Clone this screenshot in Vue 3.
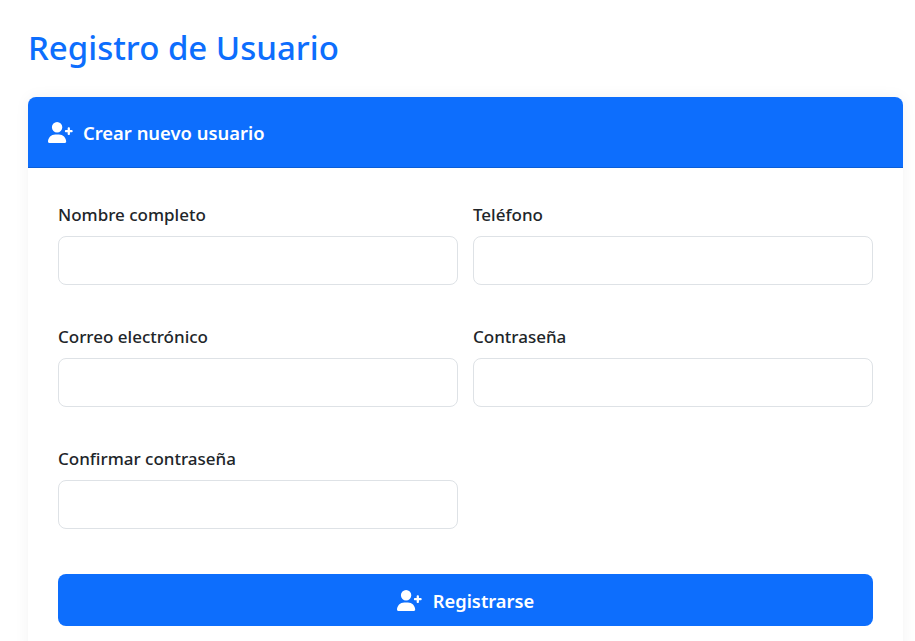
<script setup>
const fields = [
  { id: 'nombre', label: 'Nombre completo', type: 'text' },
  { id: 'telefono', label: 'Teléfono', type: 'tel' },
  { id: 'correo', label: 'Correo electrónico', type: 'email' },
  { id: 'password', label: 'Contraseña', type: 'password' },
  { id: 'confirmar', label: 'Confirmar contraseña', type: 'password' }
]
const userPlus = 'M224 256A128 128 0 1 0 224 0a128 128 0 1 0 0 256zm-45.7 48C79.8 304 0 383.8 0 482.3C0 498.7 13.3 512 29.7 512H418.3c16.4 0 29.7-13.3 29.7-29.7C448 383.8 368.2 304 269.7 304H178.3zM484 292V252H444c-15.5 0-28-12.5-28-28s12.5-28 28-28h40V156c0-15.5 12.5-28 28-28s28 12.5 28 28v40h40c15.5 0 28 12.5 28 28s-12.5 28-28 28H540v40c0 15.5-12.5 28-28 28s-28-12.5-28-28z'
</script>

<template>
  <div class="page">
    <h1 class="title">Registro de Usuario</h1>
    <div class="card">
      <div class="card-header">
        <svg class="icon" viewBox="0 0 640 512"><path :d="userPlus" /></svg>
        <span>Crear nuevo usuario</span>
      </div>
      <form class="card-body" @submit.prevent>
        <div class="form-grid">
          <div v-for="f in fields" :key="f.id" class="field">
            <label :for="f.id">{{ f.label }}</label>
            <input :id="f.id" :type="f.type" />
          </div>
        </div>
        <button class="submit" type="submit">
          <svg class="icon" viewBox="0 0 640 512"><path :d="userPlus" /></svg>
          <span>Registrarse</span>
        </button>
      </form>
    </div>
  </div>
</template>

<style>
html, body {
  margin: 0;
  overflow: hidden;
  background: #fff;
}
</style>

<style scoped>
.page {
  height: 641px;
  box-sizing: border-box;
  padding: 23px 12px 0 28px;
  overflow: hidden;
  font-family: "Noto Sans", "Open Sans", sans-serif;
  color: #212529;
}

.title {
  margin: 0 0 25px;
  height: 49px;
  line-height: 49px;
  font-size: 33px;
  font-weight: 500;
  color: #0d6efd;
}

.card {
  border-radius: 8px 8px 0 0;
  background: #fff;
  box-shadow: 0 0 15px rgba(0, 0, 0, 0.05);
}

.card-header {
  display: flex;
  align-items: center;
  gap: 9px;
  height: 70px;
  padding: 0 20px;
  border-bottom: 1px solid #0b5ed7;
  border-radius: 8px 8px 0 0;
  background: #0d6efd;
  color: #fff;
  font-size: 18.4px;
  font-weight: 600;
}

.icon {
  width: 26px;
  height: 21px;
  fill: #fff;
}

.card-body {
  padding: 35px 30px 30px;
}

.form-grid {
  display: grid;
  grid-template-columns: 400px 400px;
  column-gap: 15px;
  row-gap: 40px;
}

.field {
  display: flex;
  flex-direction: column;
}

label {
  height: 24px;
  line-height: 24px;
  margin-bottom: 9px;
  font-size: 17px;
  font-weight: 500;
}

input {
  height: 49px;
  box-sizing: border-box;
  border: 1px solid #dee2e6;
  border-radius: 8px;
  background: #fff;
}

.submit {
  display: flex;
  align-items: center;
  justify-content: center;
  gap: 10px;
  width: 100%;
  height: 52px;
  margin-top: 45px;
  border: 0;
  border-radius: 8px;
  background: #0d6efd;
  color: #fff;
  font-family: inherit;
  font-size: 18.3px;
  font-weight: 600;
}
</style>
